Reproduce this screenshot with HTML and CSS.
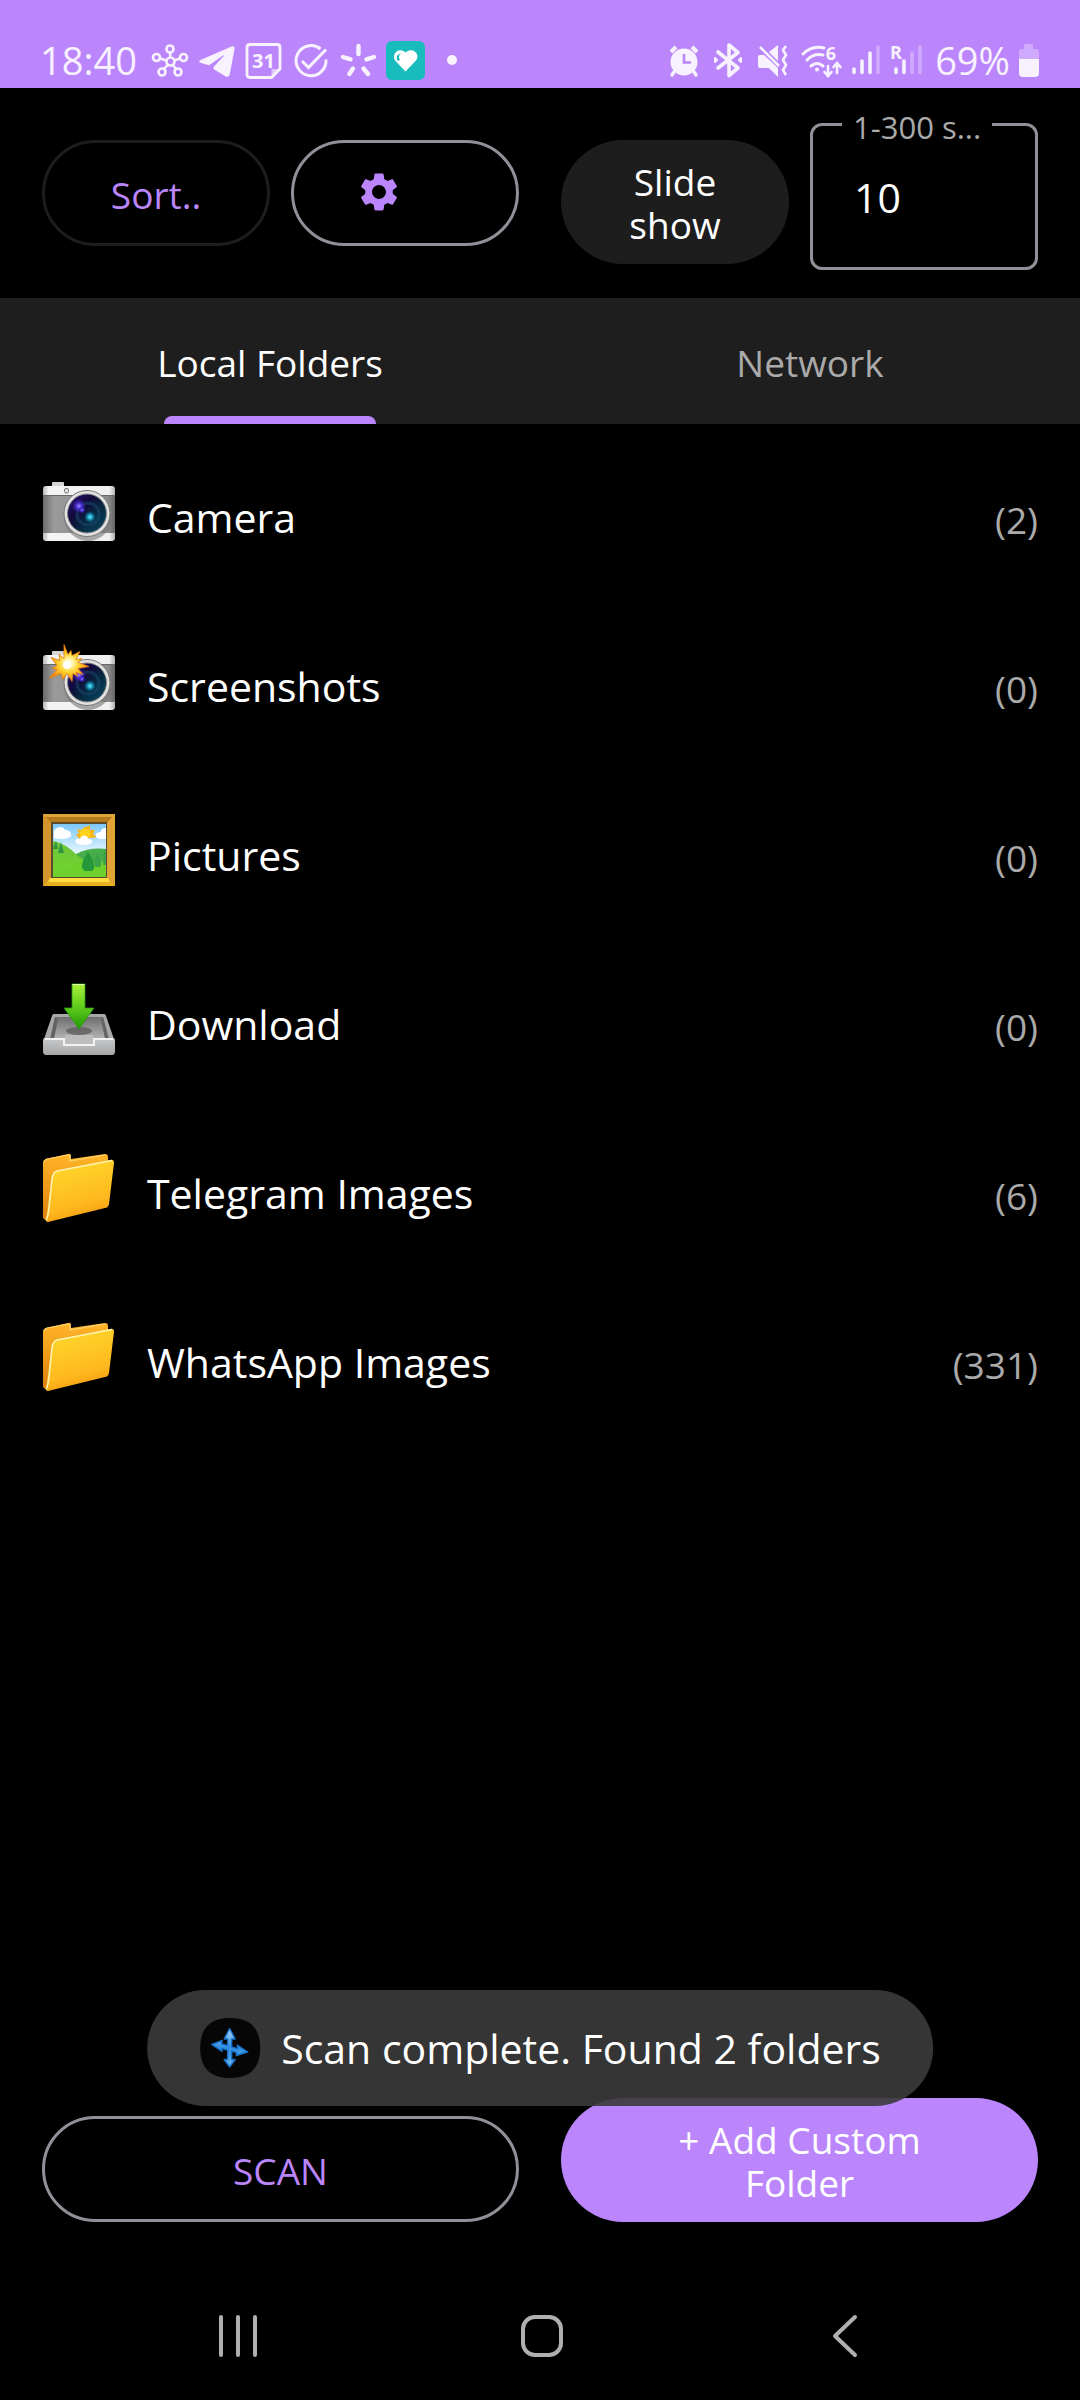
FILE: index.html
```html
<!DOCTYPE html>
<html lang="en">
<head>
<meta charset="utf-8">
<meta name="viewport" content="width=device-width, initial-scale=1">
<title>Folders</title>
<link rel="stylesheet" href="styles.css">
</head>
<body>
<svg class="defs" aria-hidden="true">
  <defs>
    <linearGradient id="silver" x1="0" x2="1" y1="0" y2="0"><stop offset="0" stop-color="#b8b8b8"/><stop offset=".08" stop-color="#f4f4f4"/><stop offset=".92" stop-color="#f0f0f0"/><stop offset="1" stop-color="#b0b0b0"/></linearGradient>
    <linearGradient id="grip" x1="0" x2="1" y1="0" y2="0"><stop offset="0" stop-color="#6c6c6c"/><stop offset=".15" stop-color="#9a9a9a"/><stop offset=".9" stop-color="#8c8c8c"/><stop offset="1" stop-color="#666"/></linearGradient>
    <linearGradient id="lens" x1="0" x2="1" y1="0" y2="1"><stop offset="0" stop-color="#2a0f7a"/><stop offset=".35" stop-color="#130a3c"/><stop offset=".6" stop-color="#06293f"/><stop offset="1" stop-color="#0b4a68"/></linearGradient>
    <radialGradient id="glowViolet"><stop offset="0" stop-color="#9a8cff"/><stop offset=".4" stop-color="#4a2fd0"/><stop offset="1" stop-color="#3a1fb0" stop-opacity="0"/></radialGradient>
    <radialGradient id="glowCyan"><stop offset="0" stop-color="#5ff0f5"/><stop offset=".4" stop-color="#1c9fc0"/><stop offset="1" stop-color="#0a6088" stop-opacity="0"/></radialGradient>
    <radialGradient id="burst"><stop offset="0" stop-color="#fff"/><stop offset=".2" stop-color="#fff6b0"/><stop offset=".5" stop-color="#ffd42e"/><stop offset="1" stop-color="#f98a12"/></radialGradient>
    <linearGradient id="sky" x1="0" x2="0" y1="0" y2="1"><stop offset="0" stop-color="#7cc8fa"/><stop offset=".55" stop-color="#e6f6ff"/></linearGradient>
    <linearGradient id="grass" x1="0" x2="0" y1="0" y2="1"><stop offset="0" stop-color="#6cc23c"/><stop offset="1" stop-color="#74d72c"/></linearGradient>
    <linearGradient id="arrow" x1="0" x2="0" y1="0" y2="1"><stop offset="0" stop-color="#a8f03a"/><stop offset=".5" stop-color="#62cc1c"/><stop offset="1" stop-color="#1f9a06"/></linearGradient>
    <linearGradient id="tray" x1="0" x2="0" y1="0" y2="1"><stop offset="0" stop-color="#6e6e6e"/><stop offset="1" stop-color="#b4b4b4"/></linearGradient>
    <linearGradient id="trayFront" x1="0" x2="0" y1="0" y2="1"><stop offset="0" stop-color="#c8cacc"/><stop offset="1" stop-color="#a4a6a8"/></linearGradient>
    <linearGradient id="folderFront" x1="0" x2=".3" y1="0" y2="1"><stop offset="0" stop-color="#ffdc2e"/><stop offset=".8" stop-color="#ffb81e"/><stop offset="1" stop-color="#f3a012"/></linearGradient>
    <linearGradient id="folderBack" x1="0" x2="0" y1="0" y2="1"><stop offset="0" stop-color="#ffb52a"/><stop offset=".5" stop-color="#f09a18"/><stop offset="1" stop-color="#d97f10"/></linearGradient>
    <linearGradient id="blue" x1="0" x2="0" y1="0" y2="1"><stop offset="0" stop-color="#a8d4f4"/><stop offset=".5" stop-color="#2f8fe0"/><stop offset="1" stop-color="#6fb6ec"/></linearGradient>
    <symbol id="camera" viewBox="0 0 74 74">
      <path d="M10 11V8q0-1 1-1h10q1 0 1 1v3z" fill="#d4d4d4"/>
      <rect x="1" y="11" width="72" height="55" rx="3" fill="url(#silver)"/>
      <rect x="1" y="20" width="72" height="38" fill="url(#grip)"/>
      <path d="M1 20.500h72" stroke="#666"/>
      <rect x="22.500" y="13.500" width="4" height="4.500" rx="1.500" fill="#e4e4e4" stroke="#777"/>
      <path d="M22 42c0 14 12 24 24 24s23-10 24-22z" fill="#777" opacity=".6"/>
      <circle cx="45" cy="38.500" r="23" fill="#e2e2e2" stroke="#777"/>
      <circle cx="45" cy="38.500" r="19.500" fill="url(#lens)" stroke="#8a8a8a"/>
      <circle cx="46" cy="39" r="11" fill="none" stroke="#1c4b70" stroke-width="3" opacity=".5"/>
      <circle cx="37" cy="31" r="7" fill="url(#glowViolet)"/>
      <circle cx="40" cy="35" r="3.500" fill="url(#glowViolet)"/>
      <circle cx="48" cy="42" r="6" fill="url(#glowCyan)"/>
    </symbol>
    <symbol id="folder" viewBox="0 0 74 74">
      <path d="M1 12q0-3 3-4L26 3q3-1 3 2v3l34-5q3 0 3 3v4L12 40 9 68q-4 4-8-1z" fill="url(#folderBack)"/>
      <path d="M2 11q1-2 3-3l21-4q2 0 2 2v4l35-6" fill="none" stroke="#ffd470" stroke-width="1.200"/>
      <path d="M10 26q1-5 5-6L68 9q4-1 4 3l-5 41q-1 4-4 4L6 71q-3 0-2-3z" fill="url(#folderFront)"/>
      <path d="M4 69c2-3 2-5 3-12l3-29q1-7 5-8L70 9.500" fill="none" stroke="#fff3b0" stroke-width="1.600"/>
    </symbol>
  </defs>
</svg>

<header class="status">
  <div class="status-left">
    <span class="clock">18:40</span>
    <svg width="39" height="39" viewBox="0 0 39 39" fill="none" stroke="currentColor" stroke-width="2.600"><circle cx="19.500" cy="20.500" r="4"/><circle cx="19" cy="8" r="3.500"/><circle cx="5.500" cy="16.500" r="3.500"/><circle cx="32.500" cy="16.500" r="3.500"/><circle cx="11" cy="31" r="3.500"/><circle cx="27" cy="31" r="3.500"/><path d="M19.200 11.500v5M9 17.500l6.500 2M29 17.500l-6 2M13 28l4-4.500M25 28l-3.500-4.500"/></svg>
    <svg width="39" height="39" viewBox="0 0 39 39" fill="currentColor"><path d="M2.500 19Q0 20.500 2.500 21.800l8.500 2.400L25 14.500q1.500-.6.500.8L16 25.500q-1.500 1.500.2 2.900l11.500 7q3.300 1.500 4-2L36.500 8q.3-3.500-3-2.600z"/></svg>
    <svg width="39" height="39" viewBox="0 0 39 39"><path d="M5 3.500h27q3 0 3 3V28l-8.500 8.500H5q-3 0-3-3v-27q0-3 3-3z" fill="none" stroke="currentColor" stroke-width="2.800"/><path d="M35 28h-8.500v8.500z" fill="currentColor" opacity=".6"/><text x="18.500" y="26.500" text-anchor="middle" class="day">31</text></svg>
    <svg width="39" height="39" viewBox="0 0 39 39" fill="none" stroke="currentColor" stroke-width="3"><path d="M28.500 8A15 15 0 1 0 34 18.500"/><path d="M10 20l6.500 6.500L34 8.500"/></svg>
    <svg width="39" height="39" viewBox="0 0 39 39" fill="none" stroke="currentColor" stroke-width="4.400" stroke-linecap="round"><path d="M19.500 5v8M4 16l7.500 2.300M35 16l-7.500 2.300M14 27.500l-3.700 5.500M24.500 27.500L29 33"/></svg>
    <svg width="39" height="39" viewBox="0 0 39 39"><rect width="39" height="39" rx="6" fill="#18bcbc"/><path d="M19.500 30.500L9.500 20c-5-6 3-15 10-8.500 7-6.500 16 2 10 8.500z" fill="#fff"/><path d="M12 20c-3-4 0-8 4-7.500-3 .5-4 4-2 6z" fill="#18bcbc"/></svg>
    <svg width="39" height="39" viewBox="0 0 39 39" fill="currentColor"><circle cx="19" cy="19" r="5"/></svg>
  </div>
  <div class="status-right">
    <svg width="36" height="36" viewBox="0 0 36 36" fill="none" stroke="currentColor"><circle cx="18" cy="20" r="13.500" fill="currentColor" stroke="none"/><path d="M5 10l5-5M31 10l-5-5" stroke-width="4"/><path d="M8 30l-2 3M28 30l2 3" stroke-width="3.500" stroke-linecap="round"/><path d="M18 12v8.500h7" stroke="#bb86fc" stroke-width="2.600"/></svg>
    <svg width="36" height="36" viewBox="0 0 36 36" fill="none" stroke="currentColor" stroke-width="3.600" stroke-linejoin="round" stroke-linecap="round"><path d="M8 10l20 16-9 7.500V3l9 7.500L8 26"/><path d="M5 16v4l2-2zM31 16v4l-2-2z" stroke-width="2"/></svg>
    <svg width="36" height="36" viewBox="0 0 36 36" fill="currentColor"><path d="M4 15q0-2 2-2h4l14 13v9l-9-9H6q-2 0-2-2zM15 10l9-7v16z"/><path d="M6 5l19 19M32 4l-3 4 3 5-3 5 3 5-3 5 3 5" fill="none" stroke="currentColor" stroke-width="2.600" stroke-linejoin="round"/></svg>
    <svg width="45" height="36" viewBox="0 0 45 36" fill="none" stroke="currentColor" stroke-width="3" stroke-linecap="round"><path d="M5 12Q14 3 26 6M9 18q7-7 16-5M13 24q6-5 12 0"/><circle cx="19" cy="27.500" r="2" fill="currentColor" stroke="none"/><path d="M30 24v9M26.500 30l3.500 4 3.500-4M39 31V21M35.500 25l3.500-4 3.500 4" stroke-width="2.600"/><text x="33" y="18" text-anchor="middle" class="tiny">6</text></svg>
    <svg width="30" height="36" viewBox="0 0 30 36" stroke="currentColor" stroke-width="3.600" stroke-linecap="round"><path d="M3 27v3.500M11 19v11.500M19 11v19.500"/><path d="M27 5v25.500" opacity=".35"/></svg>
    <svg width="38" height="36" viewBox="0 0 38 36" stroke="currentColor" stroke-width="3.600" stroke-linecap="round"><path d="M7 27v3.500M15 19v11.500"/><path d="M23 11v19.500M31 5v25.500" opacity=".35"/><text x="7" y="17" text-anchor="middle" class="tiny">R</text></svg>
    <span class="percent">69%</span>
    <svg width="22" height="36" viewBox="0 0 22 36" fill="currentColor"><path d="M6 7V4q0-2 2-2h5q2 0 2 2v3h3q3 0 3 3v7H1v-7q0-3 3-3z" opacity=".35"/><path d="M1 17h20v14q0 4-4 4H5q-4 0-4-4z"/></svg>
  </div>
</header>

<section class="toolbar">
  <div class="pair">
    <button class="pill outline muted">Sort..</button>
    <button class="pill outline settings" aria-label="Settings"><svg width="46" height="46" viewBox="0 0 24 24" fill="currentColor"><path d="M19.140 12.940c.04-.3.06-.61.06-.94 0-.32-.02-.64-.07-.94l2.030-1.580c.18-.14.23-.41.12-.61l-1.920-3.320c-.12-.22-.37-.29-.59-.22l-2.390.96c-.5-.38-1.030-.7-1.620-.94L14.400 2.810c-.04-.24-.24-.41-.48-.41h-3.840c-.24 0-.43.17-.47.41L9.250 5.350C8.660 5.590 8.120 5.920 7.630 6.290L5.240 5.330c-.22-.08-.47 0-.59.22L2.740 8.870C2.620 9.080 2.660 9.340 2.860 9.480l2.030 1.580C4.840 11.360 4.800 11.690 4.800 12s.02.64.07.94l-2.030 1.580c-.18.14-.23.41-.12.61l1.920 3.320c.12.22.37.29.59.22l2.390-.96c.5.38 1.030.7 1.620.94l.36 2.540c.05.24.24.41.48.41h3.840c.24 0 .44-.17.47-.41l.36-2.540c.59-.24 1.130-.56 1.620-.94l2.390.96c.22.08.47 0 .59-.22l1.920-3.320c.12-.22.07-.47-.12-.61zM12 15.600c-1.980 0-3.600-1.620-3.600-3.600s1.620-3.600 3.600-3.600 3.600 1.620 3.600 3.600-1.620 3.600-3.600 3.600z"/></svg></button>
  </div>
  <div class="pair">
    <button class="pill dark">Slide show</button>
    <div class="field">
      <label for="seconds">1-300 s...</label>
      <input id="seconds" type="text" inputmode="numeric" value="10">
    </div>
  </div>
</section>

<nav class="tabs">
  <button class="tab active">Local Folders</button>
  <button class="tab">Network</button>
</nav>

<main>
  <ul class="folders">
    <li><svg class="icon"><use href="#camera"/></svg><span class="name">Camera</span><span class="count">(2)</span></li>
    <li><svg class="icon" viewBox="0 0 74 74"><use href="#camera"/><path d="M22 .5l4 10 3-4 1 5 8-4-4 8 6-1-4 4 11 4-11 2 5 6-7-2 2 4-5-3-1 8-5-8-4 6-2-6-12 5 8-9-5-1 5-3-6-8 9 3-1-6 5 4z" fill="url(#burst)" stroke="#e07c10" stroke-width=".8"/><circle cx="25" cy="21" r="4" fill="#fff"/></svg><span class="name">Screenshots</span><span class="count">(0)</span></li>
    <li><svg class="icon" viewBox="0 0 74 74">
      <rect x="1" y="1" width="72" height="72" fill="#dca02c"/>
      <path d="M1 1h72l-8 9H9z" fill="#b57a1c"/><path d="M1 1h72l-2 3H3z" fill="#dda43a"/><path d="M1 1l8 9v55l-8 8z" fill="#d4952a"/><path d="M73 1l-8 9v55l8 8z" fill="#e0a436"/><path d="M1 73l8-8h56l8 8z" fill="#e8b020"/><path d="M8 65h58l2 4H6z" fill="#ffdc40"/>
      <rect x="9" y="9" width="56" height="56" fill="#5b4a2c"/>
      <rect x="11" y="11" width="53" height="53" fill="url(#sky)"/>
      <path d="M34 41q14-7 30-5v15H34z" fill="#48ae4c"/><path d="M11 28q12 2 24 14l9 7 20-1v16H11z" fill="url(#grass)"/><path d="M11 60q15-6 30-11l23 2v13H11z" fill="#6ed02c"/>
      <path d="M42 14l2 0 4-2v5h5l-2 4 4 3-5 1H37l-3-3 3-2-2-4 5 1z" fill="#f7b416"/><circle cx="43" cy="21" r="5.500" fill="#ffd21c"/>
      <path d="M35 31c-4-4 0-6 3-5 2-5 8-4 8 0 5 0 5 4 2 5q-7 2-13 0zM12 25v-7c4-6 10-4 11-1 7 0 8 7 3 8q-7 2-14 0zM64 26V15c-4 0-5 2-5 4-7 0-7 6-1 7z" fill="#fff"/>
      <path d="M46 39c7 10 8 16 4 19h-7c-5-3-4-8 3-19z" fill="#24983a"/><path d="M56 40c4 7 4 11 2 14h-4c-3-3-2-8 2-14zM62 38l2 2v12h-3z" fill="#3ba34a"/><path d="M19 29l3 11h-6zM14 28l2 8h-5z" fill="#2f9440"/>
    </svg><span class="name">Pictures</span><span class="count">(0)</span></li>
    <li><svg class="icon" viewBox="0 0 74 74">
      <path d="M10 34q0-2 2-2h50q2 0 2 2l9 26H1z" fill="#a8a8a8"/><path d="M13 35h48l6 22H8z" fill="url(#tray)"/><path d="M13 35L8 57h4l4-20zM61 35l6 22h-4l-4-20z" fill="#636363"/>
      <ellipse cx="37" cy="49" rx="13" ry="4" fill="#555" opacity=".7"/>
      <path d="M1 58q0-2 2-2h18q2 0 2 3 0 4 3 4h22q3 0 3-4 0-3 2-3h18q2 0 2 2v11q0 4-3 4H4q-3 0-3-4z" fill="url(#trayFront)"/>
      <path d="M23 53h28v9H23z" fill="#bdbdbd"/>
      <path d="M3 57h19v6h30v-6h19" fill="none" stroke="#f2f2f2" stroke-width="2"/>
      <path d="M30 2h13v24h9L37 47 22 26h8z" fill="url(#arrow)" stroke="#2a9a14" stroke-width=".8"/><path d="M30.500 2.500h12" stroke="#e0ffb0"/>
    </svg><span class="name">Download</span><span class="count">(0)</span></li>
    <li><svg class="icon"><use href="#folder"/></svg><span class="name">Telegram Images</span><span class="count">(6)</span></li>
    <li><svg class="icon"><use href="#folder"/></svg><span class="name">WhatsApp Images</span><span class="count">(331)</span></li>
  </ul>
</main>

<footer class="actions">
  <div class="toast" role="status">
    <svg width="62" height="62" viewBox="0 0 62 62"><path d="M31 1C51 1 61 11 61 31S51 61 31 61 1 51 1 31 11 1 31 1z" fill="#060606"/><path d="M30.500 11.500L36 22h-3.500v8l6 1.800-.5-3.800 10.500 7L37 38.500l.5-3-5-1.500v8.500H36L30.500 50 25 42.500h3.500V33l-6-1.700.5 3L12.500 27.500 23 23.500l-.5 3.500 6 1.500V22H25z" fill="url(#blue)" stroke="#1670c8" stroke-width="1.400" stroke-linejoin="round"/></svg>
    <span>Scan complete. Found 2 folders</span>
  </div>
  <button class="pill outline">SCAN</button>
  <button class="pill primary">+ Add Custom Folder</button>
</footer>

<nav class="system" aria-label="System">
  <button aria-label="Recent apps"><svg width="44" height="44" viewBox="0 0 44 44"><path d="M4 3v38M21 3v38M38 3v38"/></svg></button>
  <button aria-label="Home"><svg width="44" height="44" viewBox="0 0 44 44"><rect x="3" y="3" width="38" height="38" rx="12"/></svg></button>
  <button aria-label="Back"><svg width="44" height="44" viewBox="0 0 44 44"><path d="M32 3L12 22l20 19"/></svg></button>
</nav>
</body>
</html>
```
FILE: styles.css
```css
* { box-sizing: border-box; }

body {
  margin: 0;
  min-height: 100vh;
  display: flex;
  flex-direction: column;
  background: #000;
  color: #fff;
  font-family: "Open Sans", "Noto Sans", sans-serif;
  font-size: 37px;
  line-height: 43px;
}

button, input { font: inherit; color: inherit; }
button { border: 0; padding: 0; background: none; }
svg { display: block; flex: none; overflow: visible; }
.defs { position: absolute; width: 0; height: 0; }

.status {
  display: flex;
  justify-content: space-between;
  height: 88px;
  padding: 32px 40px 0;
  background: #bb86fc;
  color: #f8f2ff;
}
.status-left, .status-right { display: flex; align-items: center; gap: 8px; }
.clock { margin-right: 6px; font-size: 38px; }
.percent { font-size: 38px; }
.day { font-size: 20px; font-weight: 700; fill: currentColor; }
.tiny { font-size: 18px; font-weight: 700; fill: currentColor; stroke: none; }

.toolbar {
  display: grid;
  grid-template-columns: 1fr 1fr;
  gap: 42px;
  padding: 35px 42px 28px;
}
.pair {
  display: grid;
  grid-template-columns: 1fr 1fr;
  gap: 21px;
  align-items: start;
}
.pair .pill { margin-top: 17px; }

.pill {
  display: flex;
  align-items: center;
  justify-content: center;
  min-height: 106px;
  padding: 20px 60px 18px;
  border-radius: 63px;
  text-align: center;
}
.outline { border: 3px solid #938f99; color: #bb86fc; }
.muted { border-color: #1d1d1d; }
.dark { background: #1d1d1d; }
.primary { background: #bb86fc; padding: 20px 100px 18px; }
.settings { padding: 0 56px 2px 3px; }

.field {
  position: relative;
  height: 147px;
  border: 3px solid #938f99;
  border-radius: 12px;
}
.field label {
  position: absolute;
  top: -17px;
  left: 29px;
  padding: 0 11px;
  background: #000;
  color: #aaa;
  font-size: 31px;
  line-height: 36px;
  white-space: nowrap;
}
.field input {
  width: 100%;
  height: 100%;
  padding: 0 41px;
  border: 0;
  background: none;
  font-size: 41px;
}

.tabs { display: grid; grid-template-columns: 1fr 1fr; background: #1e1e1e; }
.tab { position: relative; height: 126px; padding-top: 2px; color: #aaa; }
.tab.active { color: #fff; }
.tab.active::after {
  content: "";
  position: absolute;
  left: 50%;
  bottom: 0;
  width: 212px;
  height: 8px;
  margin-left: -106px;
  border-radius: 8px 8px 0 0;
  background: #bb86fc;
}

main { flex: 1; padding: 10px 42px; }
.folders { margin: 0; padding: 0; list-style: none; }
.folders li { display: flex; align-items: center; height: 169px; }
.icon { width: 74px; height: 74px; margin: 0 31px 14px 0; }
.name { flex: 1; padding-bottom: 2px; font-size: 41px; }
.count { padding-top: 2px; color: #aaa; }

.actions {
  position: relative;
  display: grid;
  grid-template-columns: 1fr 1fr;
  gap: 42px;
  align-items: end;
  padding: 0 42px 46px;
}
.toast {
  position: absolute;
  left: 50%;
  bottom: 162px;
  display: flex;
  align-items: center;
  gap: 20px;
  height: 116px;
  padding: 0 52px;
  border-radius: 58px;
  background: rgba(58, 58, 58, .91);
  font-size: 41px;
  white-space: nowrap;
  transform: translateX(-50%);
}

.system {
  display: flex;
  justify-content: space-around;
  align-items: center;
  height: 132px;
  padding: 4px 84px 0 88px;
}
.system button { flex: 1; display: flex; justify-content: center; }
.system svg { fill: none; stroke: #b0b0b0; stroke-width: 4; stroke-linecap: round; stroke-linejoin: round; }
```
